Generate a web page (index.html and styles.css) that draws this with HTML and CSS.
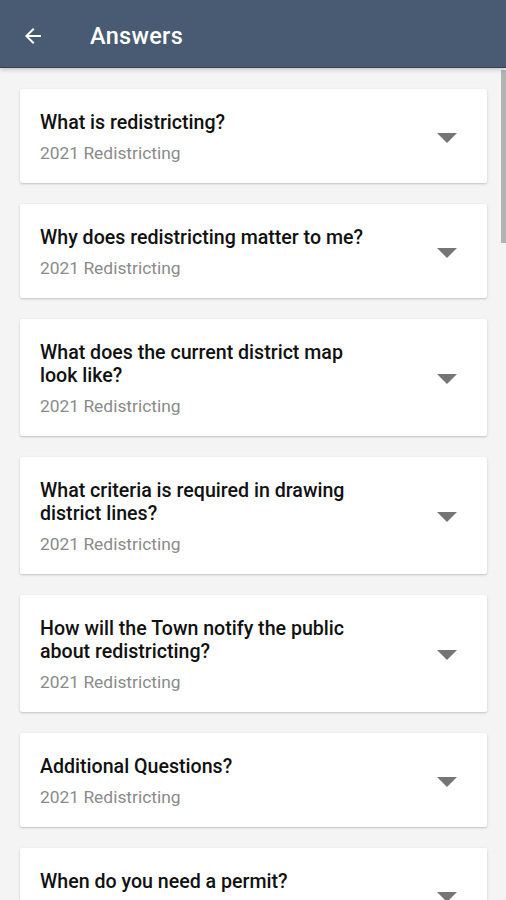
FILE: index.html
```html
<!DOCTYPE html>
<html lang="en">
<head>
<meta charset="utf-8">
<title>Answers</title>
<link rel="stylesheet" href="styles.css">
</head>
<body>
<header class="appbar">
  <svg class="back" width="24" height="24" viewBox="0 0 24 24"><path d="M20 11H7.83l5.59-5.59L12 4l-8 8 8 8 1.41-1.41L7.83 13H20v-2z" fill="#fff"/></svg>
  <h1 class="title">Answers</h1>
</header>
<main class="list">
  <div class="card">
    <div class="text"><div class="q">What is redistricting?</div><div class="sub">2021 Redistricting</div></div>
    <svg class="caret" width="20" height="10" viewBox="0 0 20 10"><path d="M0 0h20L10 10z" fill="#757575"/></svg>
  </div>
  <div class="card">
    <div class="text"><div class="q">Why does redistricting matter to me?</div><div class="sub">2021 Redistricting</div></div>
    <svg class="caret" width="20" height="10" viewBox="0 0 20 10"><path d="M0 0h20L10 10z" fill="#757575"/></svg>
  </div>
  <div class="card">
    <div class="text"><div class="q">What does the current district map look like?</div><div class="sub">2021 Redistricting</div></div>
    <svg class="caret" width="20" height="10" viewBox="0 0 20 10"><path d="M0 0h20L10 10z" fill="#757575"/></svg>
  </div>
  <div class="card">
    <div class="text"><div class="q">What criteria is required in drawing district lines?</div><div class="sub">2021 Redistricting</div></div>
    <svg class="caret" width="20" height="10" viewBox="0 0 20 10"><path d="M0 0h20L10 10z" fill="#757575"/></svg>
  </div>
  <div class="card">
    <div class="text"><div class="q">How will the Town notify the public about redistricting?</div><div class="sub">2021 Redistricting</div></div>
    <svg class="caret" width="20" height="10" viewBox="0 0 20 10"><path d="M0 0h20L10 10z" fill="#757575"/></svg>
  </div>
  <div class="card">
    <div class="text"><div class="q">Additional Questions?</div><div class="sub">2021 Redistricting</div></div>
    <svg class="caret" width="20" height="10" viewBox="0 0 20 10"><path d="M0 0h20L10 10z" fill="#757575"/></svg>
  </div>
  <div class="card">
    <div class="text"><div class="q">When do you need a permit?</div><div class="sub">2021 Redistricting</div></div>
    <svg class="caret" width="20" height="10" viewBox="0 0 20 10"><path d="M0 0h20L10 10z" fill="#757575"/></svg>
  </div>
</main>
<div class="scrollthumb"></div>
</body>
</html>
```
FILE: styles.css
```css
html, body {
  margin: 0;
  padding: 0;
  height: 900px;
  overflow: hidden;
  background: #f4f4f4;
  font-family: Roboto, "Noto Sans", sans-serif;
}
.appbar {
  height: 63px;
  padding-top: 4px;
  background: #495b72;
  border-bottom: 1px solid #2f4158;
  box-shadow: 0 2px 4px rgba(0,0,0,0.18);
  display: flex;
  align-items: center;
  padding-left: 21px;
  box-sizing: content-box;
  position: relative;
  z-index: 1;
}
.back {
  display: block;
  width: 24px;
  height: 24px;
}
.title {
  margin: 0 0 0 45px;
  color: #fff;
  font-size: 23.5px;
  font-weight: 500;
  letter-spacing: 0.3px;
}
.list {
  display: flex;
  flex-direction: column;
  gap: 21px;
  padding: 21px 19px 0 20px;
}
.card {
  background: #fff;
  border-radius: 2px;
  box-shadow: 0 1px 3px rgba(0,0,0,0.16), 0 1px 1px rgba(0,0,0,0.06);
  display: flex;
  align-items: center;
  padding: 22px 30px 19px 20px;
}
.text {
  flex: 1;
  max-width: 335px;
}
.q {
  font-size: 19.6px;
  font-weight: 500;
  line-height: 23px;
  color: #111;
}
.sub {
  margin-top: 8px;
  font-size: 17.4px;
  line-height: 22px;
  color: #8a8a8a;
}
.caret {
  margin-left: auto;
  flex: none;
}
.scrollthumb {
  position: absolute;
  top: 70px;
  right: 0;
  width: 5px;
  height: 173px;
  background: #b3b3b3;
}
```
